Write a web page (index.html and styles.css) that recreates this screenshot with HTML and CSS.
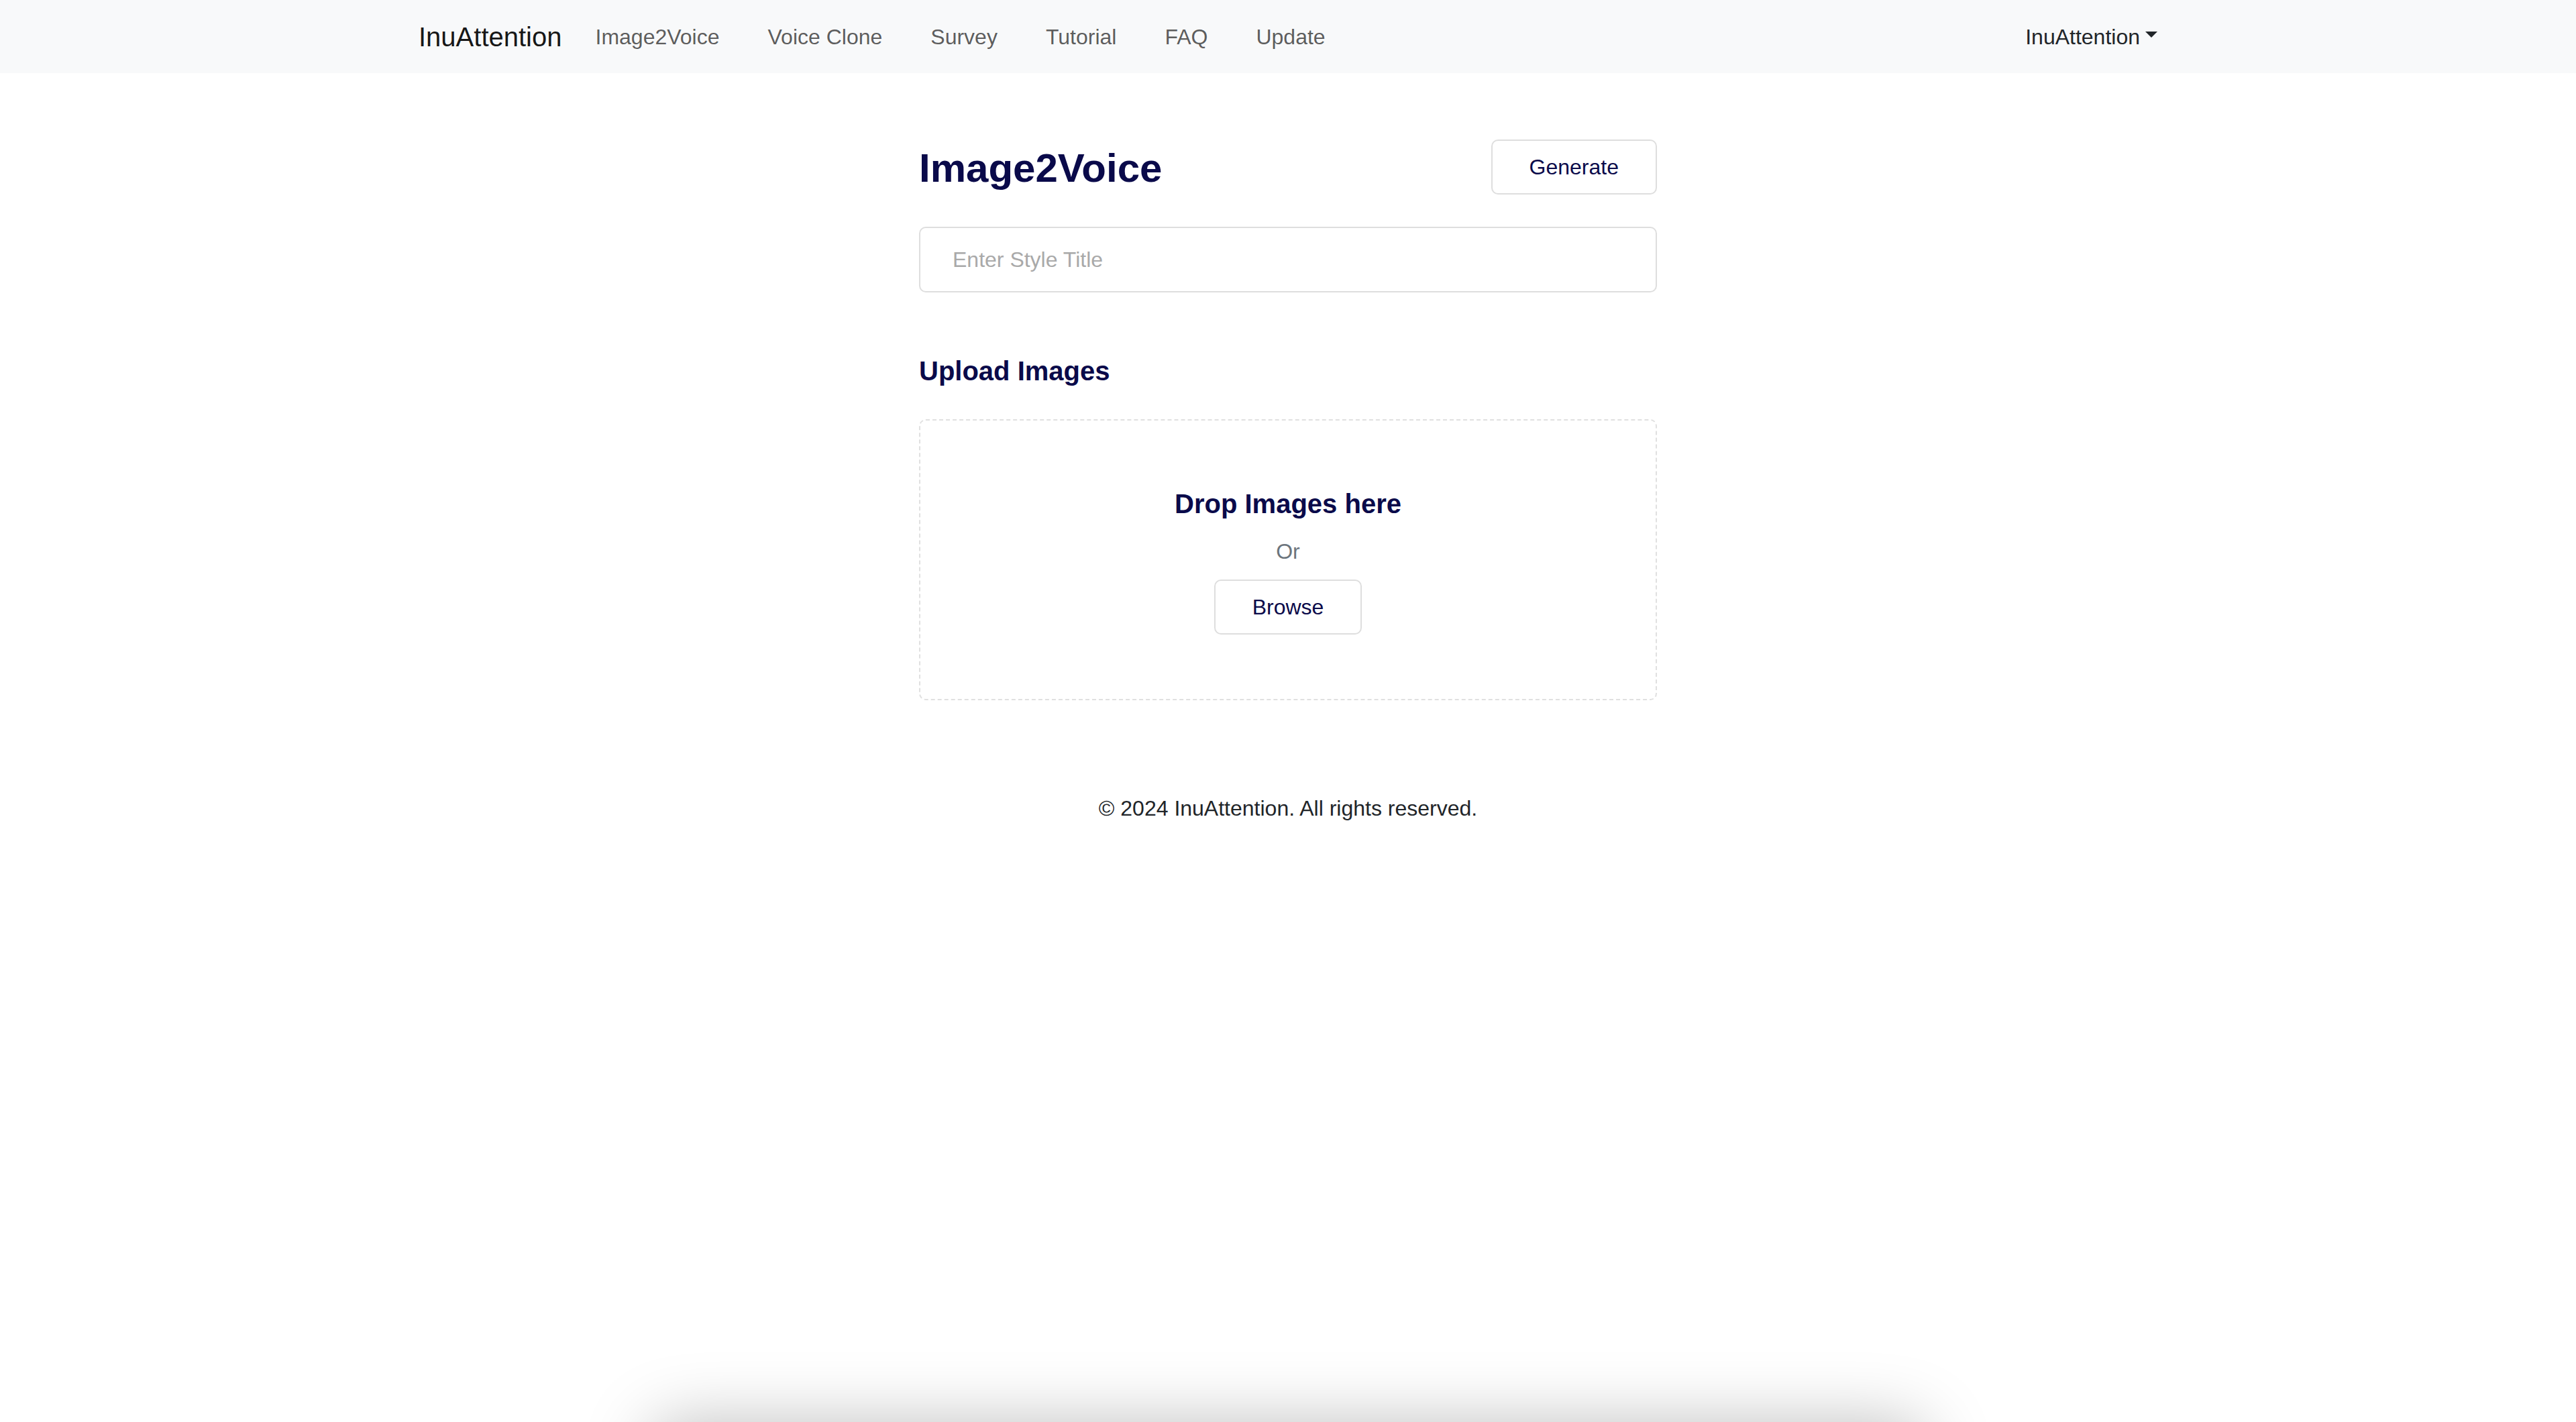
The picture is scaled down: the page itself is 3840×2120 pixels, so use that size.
FILE: index.html
```html
<!DOCTYPE html>
<html lang="en">
<head>
<meta charset="utf-8">
<title>Image2Voice - InuAttention</title>
<link rel="stylesheet" href="styles.css">
</head>
<body>
<nav class="navbar">
  <div class="nav-container">
    <a class="brand" href="#">InuAttention</a>
    <ul class="nav-links">
      <li><a href="#">Image2Voice</a></li>
      <li><a href="#">Voice Clone</a></li>
      <li><a href="#">Survey</a></li>
      <li><a href="#">Tutorial</a></li>
      <li><a href="#">FAQ</a></li>
      <li><a href="#">Update</a></li>
    </ul>
    <a class="user-menu" href="#">InuAttention<span class="caret"></span></a>
  </div>
</nav>

<main class="main">
  <div class="title-row">
    <h1 class="page-title">Image2Voice</h1>
    <button class="btn" type="button">Generate</button>
  </div>
  <input class="style-input" type="text" placeholder="Enter Style Title">

  <h2 class="section-title">Upload Images</h2>
  <div class="dropzone">
    <h3 class="drop-title">Drop Images here</h3>
    <p class="drop-or">Or</p>
    <button class="btn" type="button">Browse</button>
  </div>
</main>

<footer class="footer">© 2024 InuAttention. All rights reserved.</footer>

<div class="bottom-sheet"></div>
</body>
</html>
```
FILE: styles.css
```css
html, body {
  margin: 0;
  padding: 0;
  background: #ffffff;
}

body {
  font-family: "Liberation Sans", Arial, Helvetica, sans-serif;
  color: #212529;
  font-size: 32px;
  line-height: 1.5;
}

a {
  text-decoration: none;
}

.navbar {
  background: #f8f9fa;
  height: 109px;
}

.nav-container {
  width: 2592px;
  margin: 0 auto;
  height: 100%;
  display: flex;
  align-items: center;
}

.brand {
  font-size: 40px;
  line-height: 60px;
  color: rgba(0, 0, 0, 0.92);
}

.nav-links {
  list-style: none;
  margin: 0 0 0 50px;
  padding: 0;
  display: flex;
  gap: 72px;
}

.nav-links a {
  color: rgba(0, 0, 0, 0.65);
  font-size: 32px;
  line-height: 48px;
}

.user-menu {
  margin-left: auto;
  color: #212529;
  font-size: 32px;
  line-height: 48px;
  display: flex;
  align-items: center;
}

.caret {
  display: inline-block;
  margin-left: 8px;
  width: 0;
  height: 0;
  border-top: 9.6px solid #212529;
  border-left: 9.6px solid transparent;
  border-right: 9.6px solid transparent;
  margin-top: -6px;
}

.main {
  width: 1100px;
  margin: 0 auto;
  padding-top: 99px;
}

.title-row {
  display: flex;
  justify-content: space-between;
  align-items: center;
}

.page-title {
  margin: 0;
  font-size: 60px;
  line-height: 1.2;
  font-weight: 700;
  color: #0a0a4a;
  position: relative;
  top: 2px;
}

.btn {
  font-family: "Liberation Sans", Arial, Helvetica, sans-serif;
  font-size: 32px;
  line-height: 48px;
  padding: 15px 55px;
  background: #ffffff;
  border: 2px solid #dedede;
  border-radius: 10px;
  color: #0a0a4a;
  cursor: pointer;
}

.style-input {
  display: block;
  box-sizing: border-box;
  width: 100%;
  height: 98px;
  margin-top: 48px;
  padding: 0 48px;
  border: 2px solid #dedede;
  border-radius: 10px;
  font-family: "Liberation Sans", Arial, Helvetica, sans-serif;
  font-size: 32px;
  color: #212529;
  outline: none;
}

.style-input::placeholder {
  color: #a9a9a9;
}

.section-title {
  margin: 93px 0 48px;
  font-size: 40px;
  line-height: 48px;
  font-weight: 700;
  color: #0a0a4a;
}

.dropzone {
  border: 2px dashed #e0e0e0;
  border-radius: 10px;
  padding: 100px 0 96px;
  text-align: center;
}

.drop-title {
  margin: 0 0 23px;
  font-size: 40px;
  line-height: 48px;
  font-weight: 700;
  color: #0a0a4a;
}

.drop-or {
  margin: 0 0 18px;
  font-size: 32px;
  line-height: 48px;
  color: #6c757d;
}

.footer {
  margin-top: 137px;
  text-align: center;
  font-size: 32px;
  line-height: 48px;
  color: #212529;
}

.bottom-sheet {
  position: fixed;
  left: 50%;
  bottom: -300px;
  width: 1900px;
  height: 300px;
  transform: translateX(-50%);
  border-radius: 40px;
  background: #ffffff;
  box-shadow: 0 0 100px rgba(0, 0, 0, 0.25);
}
```
